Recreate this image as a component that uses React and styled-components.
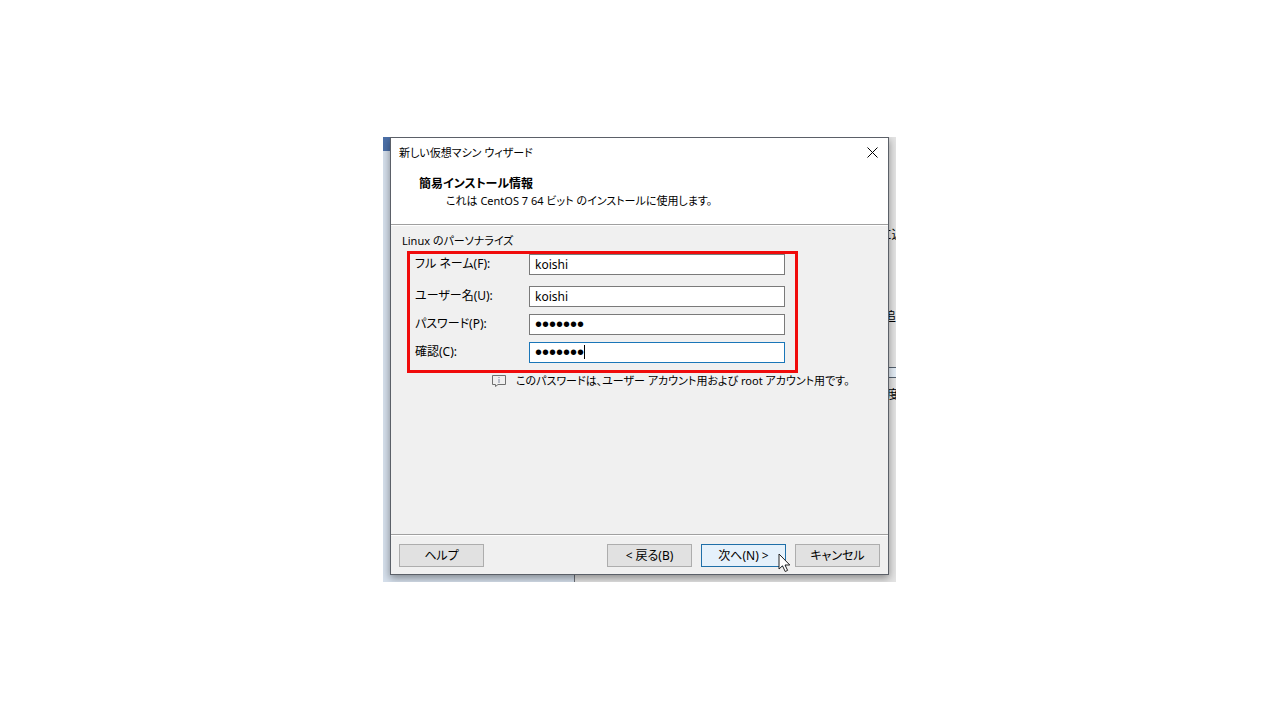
import React from 'react';
import styled, { createGlobalStyle } from 'styled-components';

const GlobalStyle = createGlobalStyle`
  * {
    box-sizing: border-box;
  }

  body {
    margin: 0;
    background-color: #fff;
  }

  body, input, button {
    font-family: 'Noto Sans', 'Noto Sans CJK JP', sans-serif;
    font-size: 12px;
    line-height: 18px;
    font-feature-settings: 'palt';
    color: #000;
  }
`;

const Page = styled.main`
  min-height: 100vh;
  display: flex;
  align-items: center;
  justify-content: center;
  padding: 0 1px 1px 0;
`;

const Desktop = styled.div`
  position: relative;
  overflow: hidden;
  width: 100%;
  max-width: 513px;
  padding: 0 7px 7px;
  background: #e4e4e4;
`;

/* window that sits behind the wizard */
const BackPane = styled.div`
  position: absolute;
  top: 0;
  bottom: 0;
  left: 0;
  width: 192px;
  border-right: 1px solid #6b7079;
  border-top: 14px solid #4c70a8;
  background: #d6e0ec;
`;

const BackText = styled.span`
  position: absolute;
  top: ${({ $top }) => $top}px;
  left: ${({ $left }) => $left}px;
  white-space: nowrap;
`;

const BackField = styled.div`
  position: absolute;
  top: 230px;
  right: -40px;
  width: 60px;
  height: 11px;
  border: 1px solid #54616f;
  background: #e4edf6;
`;

const Dialog = styled.section`
  position: relative;
  display: flex;
  flex-direction: column;
  border: 1px solid #5b6068;
  background: #f0f0f0;
  box-shadow: 0 3px 8px rgba(0, 0, 0, 0.4);
`;

const TitleBar = styled.header`
  display: flex;
  align-items: center;
  justify-content: space-between;
  height: 29px;
  padding: 0 8px;
  background: #fff;
  font-size: 11px;
`;

const CloseButton = styled.button`
  display: flex;
  padding: 2px;
  border: 0;
  background: none;
`;

const Heading = styled.div`
  height: 57px;
  padding: 8px 28px 0;
  background: #fff;

  h1 {
    margin: 0;
    font-size: 12px;
    line-height: 17px;
  }

  p {
    margin: 0;
    padding-left: 27px;
    font-size: 11px;
  }
`;

const Divider = styled.hr`
  width: 100%;
  height: 2px;
  margin: 0;
  border: 0;
  border-top: 1px solid #a0a0a0;
  background: #fff;
`;

const Content = styled.form`
  min-height: 308px;
  padding: 6px 16px 0;
`;

const GroupLabel = styled.h2`
  margin: 0 0 1px -5px;
  font-size: 11px;
  font-weight: normal;
  line-height: 18px;
`;

const Fields = styled.div`
  display: flex;
  flex-direction: column;
  gap: 7px;
  width: 100%;
  max-width: 391px;
  padding: 0 10px 7px 5px;
  border: 3px solid #f00b0b;
`;

const Field = styled.div`
  display: flex;
  position: relative;
  margin-bottom: ${({ $spaced }) => ($spaced ? 4 : 0)}px;

  label {
    width: 114px;
    flex: none;
    padding-top: 1px;
  }
`;

const TextBox = styled.input`
  flex: 1;
  min-width: 0;
  height: 21px;
  padding: 0 5px;
  border: 1px solid ${({ $active }) => ($active ? '#1a76b8' : '#7a7a7a')};
  border-radius: 0;
  background: #fff;
  outline: none;

  &[type='password'] {
    font-family: 'Liberation Sans', sans-serif;
    font-size: 20px;
  }
`;

const Caret = styled.span`
  position: absolute;
  top: 3px;
  left: 169px;
  width: 1px;
  height: 14px;
  background: #000;
`;

const Note = styled.p`
  display: flex;
  align-items: center;
  gap: 10px;
  margin: 0;
  padding-left: 85px;
  font-size: 11px;
  line-height: 16px;

  svg {
    flex: none;
  }
`;

const Footer = styled.footer`
  display: flex;
  gap: 9px;
  padding: 8px 8px 7px;
`;

const PushButton = styled.button`
  position: relative;
  width: 85px;
  height: 23px;
  padding: 1px 0 0;
  border: 1px solid ${({ $active }) => ($active ? '#1f6fa8' : '#adadad')};
  background: ${({ $active }) => ($active ? '#e5f1fb' : '#e1e1e1')};
  line-height: 20px;
  margin-right: ${({ $first }) => ($first ? 'auto' : '0')};
`;

const Pointer = styled.svg`
  position: absolute;
  top: 8px;
  left: 76px;
  z-index: 1;
`;

const fields = [
  { id: 'fullName', label: 'フル ネーム(F):', type: 'text', value: 'koishi', spaced: true },
  { id: 'userName', label: 'ユーザー名(U):', type: 'text', value: 'koishi' },
  { id: 'password', label: 'パスワード(P):', type: 'password', value: 'koishi7' },
  { id: 'confirm', label: '確認(C):', type: 'password', value: 'koishi7', active: true },
];

function App() {
  return (
    <Page>
      <GlobalStyle />
      <Desktop>
        <BackPane />
        <BackText $top={89} $left={497}>に込</BackText>
        <BackText $top={171} $left={501}>追加</BackText>
        <BackField />
        <BackText $top={249} $left={504}>度</BackText>

        <Dialog>
          <TitleBar>
            <span>新しい仮想マシン ウィザード</span>
            <CloseButton type="button" aria-label="閉じる">
              <svg width="11" height="11" viewBox="0 0 11 11" fill="none" stroke="#000">
                <path d="M0.5 0.5L10.5 10.5M10.5 0.5L0.5 10.5" />
              </svg>
            </CloseButton>
          </TitleBar>
          <Heading>
            <h1>簡易インストール情報</h1>
            <p>これは CentOS 7 64 ビット のインストールに使用します。</p>
          </Heading>
          <Divider />

          <Content>
            <GroupLabel>Linux のパーソナライズ</GroupLabel>
            <Fields>
              {fields.map((field) => (
                <Field key={field.id} $spaced={field.spaced}>
                  <label htmlFor={field.id}>{field.label}</label>
                  <TextBox
                    id={field.id}
                    type={field.type}
                    defaultValue={field.value}
                    autoComplete="off"
                    $active={field.active}
                  />
                  {field.active && <Caret />}
                </Field>
              ))}
            </Fields>
            <Note>
              <svg width="14" height="12" viewBox="0 0 14 12" fill="none" stroke="#707070">
                <path d="M0.5 0.5H13.5V9.5H6L3.5 11.5V9.5H0.5Z" />
                <path d="M7 2V3M7 4V8" stroke="#8088a0" />
              </svg>
              このパスワードは、ユーザー アカウント用および root アカウント用です。
            </Note>
          </Content>

          <Divider />
          <Footer>
            <PushButton type="button" $first>ヘルプ</PushButton>
            <PushButton type="button">&lt; 戻る(B)</PushButton>
            <PushButton type="button" $active>
              次へ(N) &gt;
              <Pointer width="13" height="20" viewBox="0 0 13 20">
                <path
                  d="M1 1V16L4.5 12.8L7.2 18.5L9.6 17.4L7 12H11.8Z"
                  fill="#fff"
                  stroke="#222"
                />
              </Pointer>
            </PushButton>
            <PushButton type="button">キャンセル</PushButton>
          </Footer>
        </Dialog>
      </Desktop>
    </Page>
  );
}

export default App;
